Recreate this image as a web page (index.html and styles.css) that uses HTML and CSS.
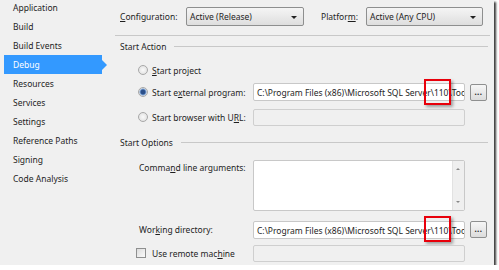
FILE: index.html
```html
<!DOCTYPE html>
<html lang="en">
<head>
  <meta charset="UTF-8">
  <title>Debug Properties</title>
  <link rel="stylesheet" href="styles.css">
</head>
<body>
  <div class="frame">
    <ul class="nav">
      <li>Application</li>
      <li>Build</li>
      <li>Build Events</li>
      <li class="active">Debug</li>
      <li>Resources</li>
      <li>Services</li>
      <li>Settings</li>
      <li>Reference Paths</li>
      <li>Signing</li>
      <li>Code Analysis</li>
    </ul>

    <div class="main">
      <div class="top-row">
        <span class="lbl-config"><u>C</u>onfiguration:</span>
        <div class="combo combo-config">Active (Release)<span class="caret"></span></div>
        <span class="lbl-platform">Platfor<u>m</u>:</span>
        <div class="combo combo-platform">Active (Any CPU)<span class="caret"></span></div>
      </div>

      <div class="section-title">Start Action</div>

      <div class="radio-row first">
        <span class="radio"></span>
        <span><u>S</u>tart project</span>
      </div>
      <div class="radio-row external">
        <span class="radio checked"></span>
        <span class="lbl">Start e<u>x</u>ternal program:</span>
        <div class="box path">C:\Program Files (x86)\Microsoft SQL Server\110\Tools</div>
        <div class="btn">...</div>
        <div class="mark"></div>
      </div>
      <div class="radio-row browser">
        <span class="radio"></span>
        <span class="lbl">Start browser with U<u>R</u>L:</span>
        <div class="box empty"></div>
      </div>

      <div class="section-title options">Start Options</div>

      <div class="opt-row args">
        <span class="lbl">Comma<u>n</u>d line arguments:</span>
        <div class="box area">
          <div class="scroll"><span class="up"></span><span class="down"></span></div>
        </div>
      </div>
      <div class="opt-row work">
        <span class="lbl">Wor<u>k</u>ing directory:</span>
        <div class="box path">C:\Program Files (x86)\Microsoft SQL Server\110\Tools</div>
        <div class="btn">...</div>
        <div class="mark"></div>
      </div>
      <div class="opt-row remote">
        <span class="check"></span>
        <span class="lbl">Use remote mac<u>h</u>ine</span>
        <div class="box empty"></div>
      </div>
    </div>
  </div>
</body>
</html>
```

FILE: styles.css
```css
* { box-sizing: border-box; }
body {
  margin: 0;
  background: #fff;
  font-family: 'Noto Sans', sans-serif;
  font-size: 8.5px;
  color: #1e1e1e;
}

u { text-decoration: underline; text-underline-offset: 1px; }

.frame {
  display: flex;
  width: 494px;
  height: 265px;
  background: #f0f0f0;
  box-shadow: 2px 2px 2px #3a3a3a;
}

.nav {
  list-style: none;
  margin: 0;
  padding: 0;
  width: 108px;
  flex-shrink: 0;
}

.nav li {
  height: 19px;
  line-height: 19px;
  width: 98px;
  margin-left: 4px;
  padding-left: 9px;
  position: relative;
}

.nav li:first-child { margin-top: -2px; }

.nav li.active {
  background: #3399ff;
  color: #fff;
}

.nav li.active::after {
  content: "";
  position: absolute;
  right: -5px;
  top: 5px;
  border-left: 5px solid #3399ff;
  border-top: 5px solid transparent;
  border-bottom: 5px solid transparent;
}

.main {
  flex: 1;
  padding: 6px 4px 0 7px;
}

.top-row {
  display: flex;
  align-items: center;
  height: 20px;
  padding-left: 5px;
  padding-bottom: 9px;
  border-bottom: 1px solid #c8c8c8;
  box-sizing: content-box;
}

.lbl-config { width: 66px; }
.lbl-platform { width: 45px; }

.combo {
  height: 19px;
  display: flex;
  align-items: center;
  padding-left: 3px;
  border: 1px solid #8e8f8f;
  border-radius: 2px;
  background: linear-gradient(#f5f5f5, #dedede);
  position: relative;
}

.combo-config { width: 118px; margin-right: 17px; }
.combo-platform { width: 117px; }

.caret {
  position: absolute;
  right: 6px;
  top: 8px;
  border-top: 3px solid #222;
  border-left: 3px solid transparent;
  border-right: 3px solid transparent;
}

.section-title {
  display: flex;
  align-items: center;
  height: 18px;
  margin-top: 1px;
  padding-left: 5px;
  gap: 8px;
}

.section-title.options { margin-top: 7px; }

.section-title::after {
  content: "";
  flex: 1;
  height: 1px;
  background: #c8c8c8;
  margin-right: 2px;
}

.radio-row, .opt-row {
  display: flex;
  align-items: center;
  position: relative;
}

.radio-row {
  padding-left: 23px;
  height: 18px;
}

.radio-row.first { margin-top: 8px; height: 14px; }
.radio-row.external { margin-top: 6px; }
.radio-row.browser { margin-top: 7px; }

.radio {
  width: 10px;
  height: 10px;
  border-radius: 50%;
  border: 1px solid #a8a8a8;
  background: radial-gradient(#fafafa, #dcdcdc);
  margin-right: 4px;
  flex-shrink: 0;
}

.radio.checked {
  background: radial-gradient(circle, #2a4f8a 0 2px, #7fa5d8 3px, #e6e6e6 4px);
}

.radio-row .lbl { width: 101px; }

.box {
  width: 212px;
  height: 18px;
  border: 1px solid #c8c8c8;
  border-radius: 2px;
  background: #fff;
  overflow: hidden;
  white-space: nowrap;
  padding: 3px 0 0 3px;
  line-height: 11px;
  flex-shrink: 0;
}

.box.empty { background: #f0f0f0; border-color: #cfcfcf; height: 17px; }

.btn {
  width: 17px;
  height: 17px;
  margin-left: 5px;
  border: 1px solid #8e8f8f;
  border-radius: 2px;
  background: linear-gradient(#f6f6f6, #dcdcdc);
  text-align: center;
  line-height: 13px;
  font-size: 8px;
  font-weight: bold;
  letter-spacing: 0.5px;
}

.mark {
  position: absolute;
  left: 309px;
  top: -4px;
  width: 27px;
  height: 26px;
  border: 2px solid #e8000b;
  box-shadow: 2px 2px 3px rgba(0,0,0,0.35);
}

.opt-row { padding-left: 24px; }
.opt-row .lbl { width: 114px; }

.opt-row.args {
  align-items: flex-start;
  margin-top: 9px;
}

.opt-row.args .lbl { padding-top: 2px; }

.box.area {
  height: 51px;
  padding: 0;
  position: relative;
}

.scroll {
  position: absolute;
  right: 0;
  top: 0;
  bottom: 0;
  width: 12px;
  background: #efefef;
  border-left: 1px solid #e2e2e2;
}

.up, .down {
  position: absolute;
  left: 3px;
  border-left: 2px solid transparent;
  border-right: 2px solid transparent;
}

.up { top: 7px; border-bottom: 2px solid #888; }
.down { bottom: 7px; border-top: 2px solid #888; }

.opt-row.work { margin-top: 9px; height: 19px; }

.opt-row.remote {
  margin-top: 5px;
  padding-left: 21px;
  height: 18px;
}

.check {
  width: 10px;
  height: 10px;
  border: 1px solid #8e8f8f;
  background: linear-gradient(135deg, #dcdcdc, #fafafa);
  margin-right: 6px;
}

.remote .lbl { width: 101px; }
```
